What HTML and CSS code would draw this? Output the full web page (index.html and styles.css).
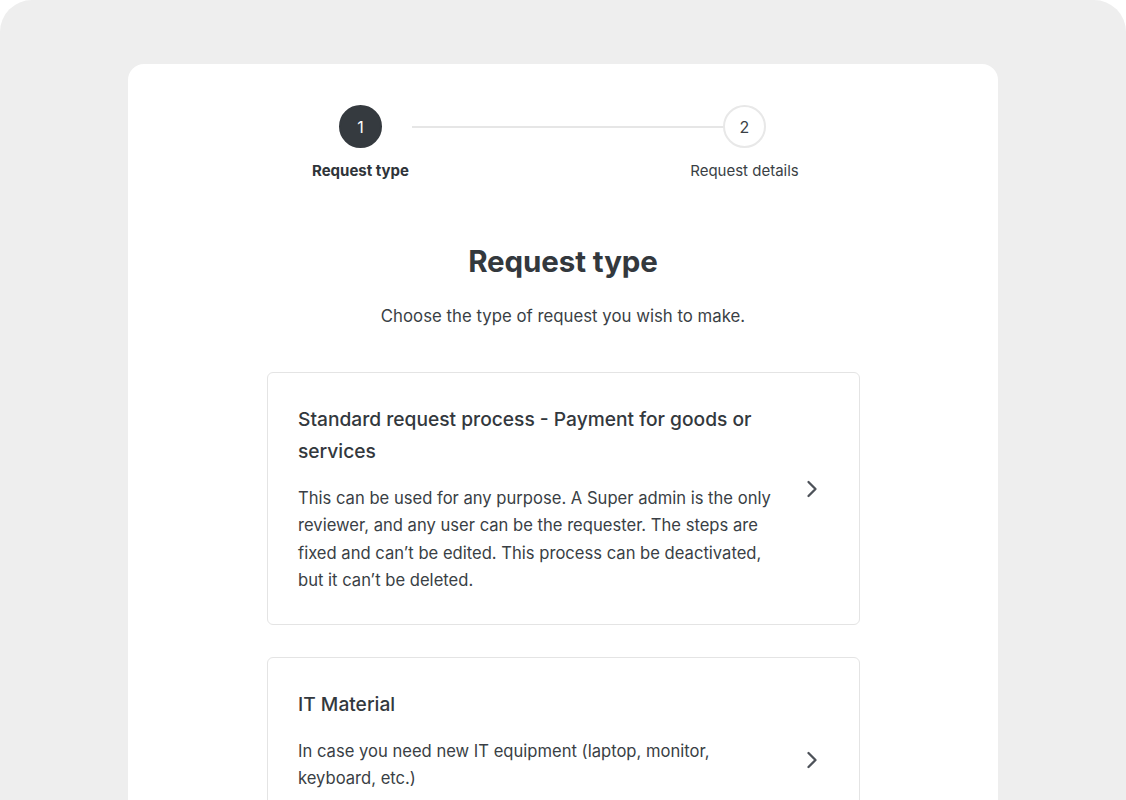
FILE: index.html
```html
<!DOCTYPE html>
<html lang="en">
<head>
<meta charset="utf-8">
<link rel="stylesheet" href="styles.css">
</head>
<body>
<div class="frame">
  <div class="panel">
    <div class="stepper">
      <div class="step">
        <div class="circle active">1</div>
        <div class="step-label bold">Request type</div>
      </div>
      <div class="line"></div>
      <div class="step">
        <div class="circle">2</div>
        <div class="step-label">Request details</div>
      </div>
    </div>
    <h1 class="title">Request type</h1>
    <p class="subtitle">Choose the type of request you wish to make.</p>
    <div class="list">
      <div class="option">
        <div class="option-body">
          <div class="option-title">Standard request process - Payment for goods or services</div>
          <div class="option-text">This can be used for any purpose. A Super admin is the only reviewer, and any user can be the requester. The steps are fixed and can’t be edited. This process can be deactivated, but it can’t be deleted.</div>
        </div>
        <svg class="chev" width="12" height="18" viewBox="0 0 12 18"><path d="M2.5 2 L9.5 9 L2.5 16" fill="none" stroke="#4d5259" stroke-width="2.3" stroke-linecap="round" stroke-linejoin="round"/></svg>
      </div>
      <div class="option tall">
        <div class="option-body">
          <div class="option-title">IT Material</div>
          <div class="option-text">In case you need new IT equipment (laptop, monitor, keyboard, etc.)</div>
        </div>
        <svg class="chev" width="12" height="18" viewBox="0 0 12 18"><path d="M2.5 2 L9.5 9 L2.5 16" fill="none" stroke="#4d5259" stroke-width="2.3" stroke-linecap="round" stroke-linejoin="round"/></svg>
      </div>
    </div>
  </div>
</div>
</body>
</html>
```
FILE: styles.css
```css
* { box-sizing: border-box; }
html, body { margin: 0; padding: 0; background: #ffffff; }
body {
  font-family: "Inter", "Liberation Sans", sans-serif;
  color: #353a3f;
  width: 1126px;
  height: 800px;
  overflow: hidden;
}
.frame {
  background: #eeeeee;
  border-radius: 32px 32px 0 0;
  height: 840px;
  padding: 64px 128px 0;
}
.panel {
  background: #ffffff;
  border-radius: 16px;
  height: 900px;
  padding-top: 41px;
  display: flex;
  flex-direction: column;
  align-items: center;
}
.stepper {
  display: flex;
  align-items: flex-start;
  width: 504px;
  margin-right: 21px;
}
.step {
  display: flex;
  flex-direction: column;
  align-items: center;
  width: 120px;
  flex: none;
}
.circle {
  width: 43px;
  height: 43px;
  border-radius: 50%;
  border: 2px solid #e8e8e8;
  display: flex;
  align-items: center;
  justify-content: center;
  font-size: 16px;
  color: #3a3f45;
  background: #fff;
}
.circle.active {
  background: #353a3f;
  border-color: #353a3f;
  color: #ffffff;
}
.line {
  flex: 1;
  height: 2px;
  background: #e6e6e6;
  margin-top: 21px;
  margin-left: -9px;
  margin-right: -39px;
}
.step-label {
  font-size: 15px;
  margin-top: 13px;
  white-space: nowrap;
  color: #3a3f45;
}
.step-label.bold { font-weight: 700; color: #2f3439; }
.title {
  font-size: 29.5px;
  font-weight: 700;
  margin: 63px 0 0;
  letter-spacing: -0.1px;
  color: #33383d;
}
.subtitle {
  font-size: 16.8px;
  margin: 27px 0 0;
  color: #3a3f45;
}
.list {
  margin-top: 46px;
  width: 593px;
  margin-left: 1px;
  display: flex;
  flex-direction: column;
  gap: 32px;
}
.option {
  border: 1px solid #e4e4e4;
  border-radius: 6px;
  padding: 30px 41px 30px 30px;
  display: flex;
  align-items: center;
  gap: 21px;
}
.option-body { flex: 1; }
.option-title {
  font-size: 19.2px;
  line-height: 32px;
  font-weight: 500;
  color: #33383d;
}
.option-text {
  font-size: 16.6px;
  line-height: 27.3px;
  margin-top: 18px;
  color: #3a3f45;
}
.chev { flex: none; margin-bottom: 20px; }
.option.tall .chev { margin-bottom: -40px; }
```
